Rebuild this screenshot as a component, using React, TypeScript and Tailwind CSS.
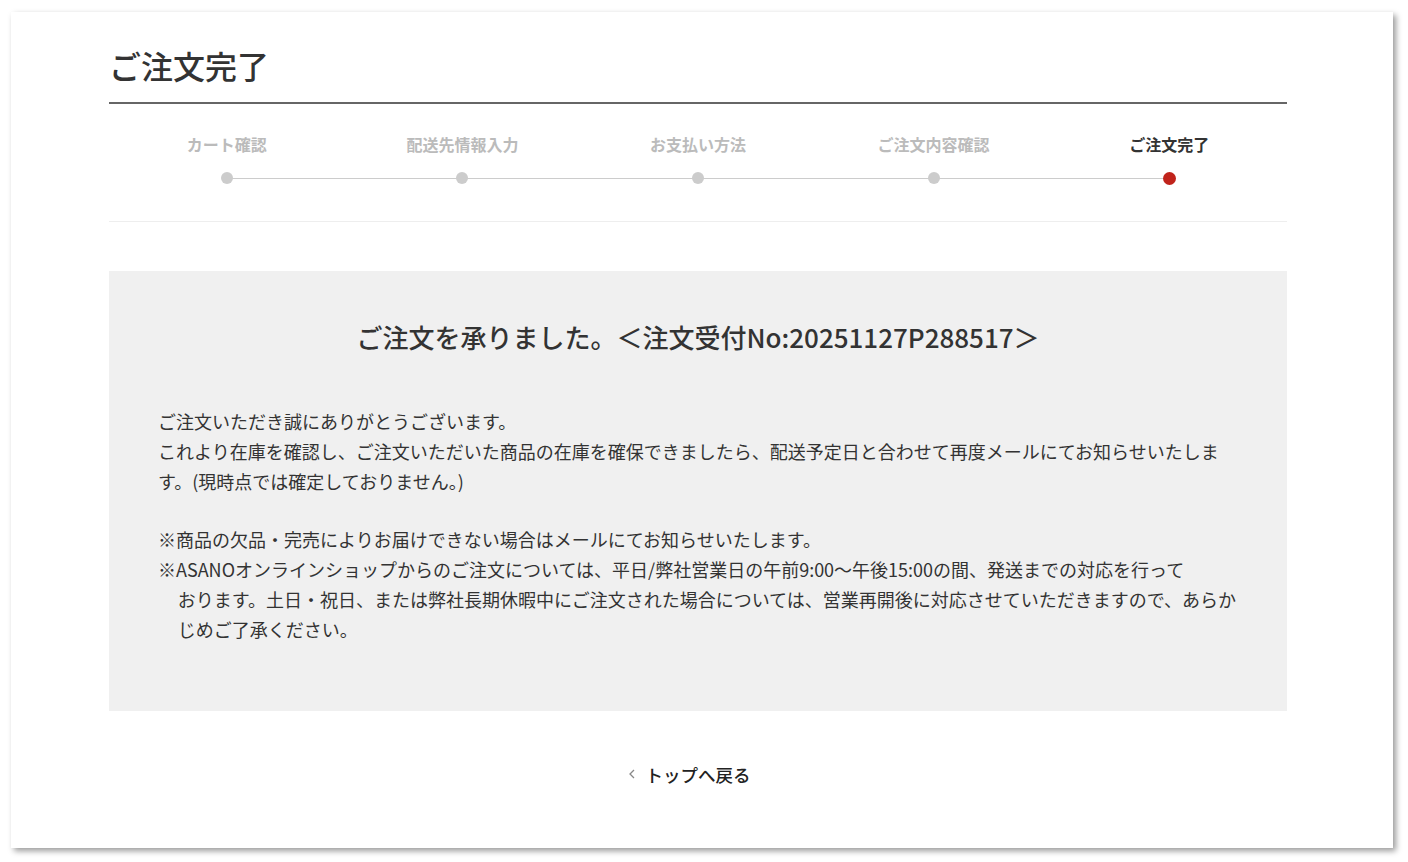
const steps = ["カート確認", "配送先情報入力", "お支払い方法", "ご注文内容確認", "ご注文完了"];

function Stepper({ current }: { current: number }) {
  return (
    <div className="relative grid grid-cols-5 pt-[28px] pb-[36px] border-b border-[#eeeeee]">
      {/* connecting line between first and last dot */}
      <div className="absolute left-[10%] right-[10%] top-[74px] h-px bg-[#cccccc]" />
      {steps.map((label, i) => {
        const active = i === current;
        return (
          <div key={label} className="relative flex flex-col items-center">
            <span
              className={
                active
                  ? "text-[16px] leading-[24px] font-bold text-[#333333]"
                  : "text-[16px] leading-[24px] font-bold text-[#bbbbbb]"
              }
            >
              {label}
            </span>
            <span
              className={
                active
                  ? "mt-[16px] w-[13px] h-[13px] rounded-full bg-[#c0231b]"
                  : "mt-[16px] w-[12px] h-[12px] rounded-full bg-[#cccccc]"
              }
            />
          </div>
        );
      })}
    </div>
  );
}

export default function App() {
  return (
    <div
      className="w-[1408px] h-[862px] bg-white pl-[11px] pt-[12px]"
      style={{ fontFamily: '"Noto Sans CJK JP", "Noto Sans", sans-serif' }}
    >
      <div className="w-[1382px] h-[836px] bg-white shadow-[3px_3px_6px_rgba(0,0,0,0.4)] pl-[98px]">
        <div className="w-[1178px] text-[#333333]">
          <h1 className="pt-[31px] pb-[15px] text-[32px] leading-[44px] font-medium border-b-2 border-[#666666]">
            ご注文完了
          </h1>

          <Stepper current={4} />

          <div className="mt-[49px] bg-[#f0f0f0] h-[440px] pt-[48px] px-[49px]">
            <h2 className="text-center text-[26px] leading-[36px] font-medium">
              ご注文を承りました。＜注文受付No:20251127P288517＞
            </h2>

            <div className="mt-[51px] text-[18px] leading-[30px]">
              <p>
                ご注文いただき誠にありがとうございます。
                <br />
                これより在庫を確認し、ご注文いただいた商品の在庫を確保できましたら、配送予定日と合わせて再度メールにてお知らせいたしま
                <br />
                す。(現時点では確定しておりません。)
              </p>
              <p className="mt-[28px]">※商品の欠品・完売によりお届けできない場合はメールにてお知らせいたします。</p>
              <p className="pl-[1.1em] -indent-[1.1em]">
                ※ASANOオンラインショップからのご注文については、平日/弊社営業日の午前9:00～午後15:00の間、発送までの対応を行って
                <br />
                おります。土日・祝日、または弊社長期休暇中にご注文された場合については、営業再開後に対応させていただきますので、あらか
                <br />
                じめご了承ください。
              </p>
            </div>
          </div>

          <div className="mt-[51px] flex justify-center">
            <a href="#" className="relative text-[17.5px] leading-[26px] font-medium text-[#222222]">
              <svg width="10" height="12" viewBox="0 0 10 12" className="absolute left-[-19px] top-[6px]">
                <path d="M7 2 L3 6 L7 10" fill="none" stroke="#888888" strokeWidth="1.3" />
              </svg>
              トップへ戻る
            </a>
          </div>
        </div>
      </div>
    </div>
  );
}
